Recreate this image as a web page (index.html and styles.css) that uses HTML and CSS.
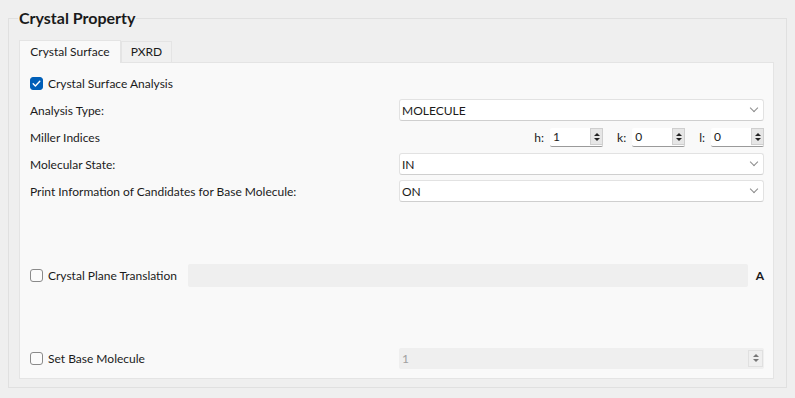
FILE: index.html
```html
<!DOCTYPE html>
<html lang="en">
<head>
    <meta charset="UTF-8">
    <title>Crystal Property</title>
    <link rel="stylesheet" href="styles.css">
</head>
<body>

    <div class="group">
        <div class="group-title">Crystal Property</div>

        <div class="tabs">
            <div class="tab active">Crystal Surface</div>
            <div class="tab">PXRD</div>
        </div>

        <div class="panel">
            <label class="row check-row">
                <span class="check checked">
                    <svg viewBox="0 0 13 13" width="13" height="13"><path d="M3.2 6.8 L5.4 9 L9.8 4.2" fill="none" stroke="#fff" stroke-width="1.4" stroke-linecap="round" stroke-linejoin="round"/></svg>
                </span>
                Crystal Surface Analysis
            </label>

            <div class="row field-row">
                <span class="label">Analysis Type:</span>
                <div class="combo">MOLECULE<span class="chevron"></span></div>
            </div>

            <div class="row field-row">
                <span class="label">Miller Indices</span>
                <div class="miller">
                    <span class="idx">h:</span>
                    <div class="spin"><span class="spin-value">1</span><span class="spin-btn"><i class="up"></i><i class="down"></i></span></div>
                    <span class="idx">k:</span>
                    <div class="spin"><span class="spin-value">0</span><span class="spin-btn"><i class="up"></i><i class="down"></i></span></div>
                    <span class="idx">l:</span>
                    <div class="spin"><span class="spin-value">0</span><span class="spin-btn"><i class="up"></i><i class="down"></i></span></div>
                </div>
            </div>

            <div class="row field-row">
                <span class="label">Molecular State:</span>
                <div class="combo">IN<span class="chevron"></span></div>
            </div>

            <div class="row field-row">
                <span class="label">Print Information of Candidates for Base Molecule:</span>
                <div class="combo">ON<span class="chevron"></span></div>
            </div>

            <div class="row plane-row">
                <label class="check-label">
                    <span class="check"></span>
                    Crystal Plane Translation
                </label>
                <div class="text-input disabled"></div>
                <span class="unit">A</span>
            </div>

            <div class="row field-row base-row">
                <label class="check-label">
                    <span class="check"></span>
                    Set Base Molecule
                </label>
                <div class="spin wide disabled"><span class="spin-value">1</span><span class="spin-btn"><i class="up"></i><i class="down"></i></span></div>
            </div>
        </div>
    </div>

</body>
</html>
```

FILE: styles.css
```css
body {
    margin: 0;
    background-color: #efefef;
    font-family: 'Lato', 'Noto Sans', sans-serif;
    font-size: 12px;
    color: #1b1b1b;
    width: 795px;
    height: 398px;
    overflow: hidden;
}

.group {
    margin: 18px 0 0 8px;
    width: 779px;
    height: 370px;
    box-sizing: border-box;
    border: 1px solid #e0e0e0;
    padding: 21px 12px 8px 10px;
    position: relative;
}

/* title sits over the top border, like a Qt group box */
.group-title {
    position: absolute;
    top: -11px;
    left: 9px;
    padding: 0 1px;
    background-color: #efefef;
    font-size: 16px;
    line-height: 20px;
    font-weight: 700;
    color: #1a1a1a;
}

.tabs {
    display: flex;
    align-items: flex-end;
    height: 22px;
}

.tab {
    height: 21px;
    line-height: 20px;
    width: 51px;
    text-align: center;
    box-sizing: border-box;
    border: 1px solid #e4e4e4;
    border-bottom: none;
    background-color: #f0f0f0;
}

.tab.active {
    width: 102px;
    height: 23px;
    line-height: 22px;
    background-color: #f9f9f9;
    margin-bottom: -1px;
    position: relative;
    z-index: 1;
}

.panel {
    height: 317px;
    box-sizing: border-box;
    background-color: #f9f9f9;
    border: 1px solid #e4e4e4;
    padding: 9px 9px 0 10px;
    display: flex;
    flex-direction: column;
    gap: 5px;
}

.row {
    display: flex;
    align-items: center;
    height: 22px;
}

.check-row {
    gap: 5px;
}

.check {
    width: 13px;
    height: 13px;
    box-sizing: border-box;
    border: 1px solid #8a8a8a;
    border-radius: 3px;
    background-color: #fbfbfb;
    display: inline-flex;
    flex-shrink: 0;
}

.check.checked {
    background-color: #005fb8;
    border-color: #005fb8;
}

.check svg {
    margin: -1px;
}

.label,
.check-label {
    width: 369px;
    flex-shrink: 0;
    display: flex;
    align-items: center;
    gap: 5px;
}

.combo {
    flex: 1;
    height: 22px;
    box-sizing: border-box;
    border: 1px solid #e2e2e2;
    border-bottom-color: #cfcfcf;
    border-radius: 3px;
    background-color: #fff;
    padding-left: 2px;
    display: flex;
    align-items: center;
    position: relative;
}

.chevron {
    position: absolute;
    right: 6px;
    top: 5px;
    width: 5px;
    height: 5px;
    border-right: 1px solid #8c8c8c;
    border-bottom: 1px solid #8c8c8c;
    transform: rotate(45deg);
}

.miller {
    flex: 1;
    display: flex;
    justify-content: flex-end;
    align-items: center;
}

.idx {
    margin: 0 6px 0 14px;
}

.spin {
    width: 53px;
    height: 19px;
    box-sizing: border-box;
    background-color: #fff;
    border-bottom: 1px solid #9a9a9a;
    border-radius: 2px;
    display: flex;
    align-items: center;
}

.spin-value {
    flex: 1;
    padding-left: 3px;
}

.spin-btn {
    width: 13px;
    height: 17px;
    box-sizing: border-box;
    border: 1px solid #cfcfcf;
    background-color: #e6e6e6;
    display: flex;
    flex-direction: column;
    align-items: center;
    justify-content: center;
    gap: 2px;
}

.spin-btn i {
    width: 0;
    height: 0;
    border-left: 3px solid transparent;
    border-right: 3px solid transparent;
}

.spin-btn .up {
    border-bottom: 3px solid #222;
}

.spin-btn .down {
    border-top: 3px solid #222;
}

.plane-row {
    height: 23px;
    margin-top: 57px;
}

.plane-row .check-label {
    width: auto;
    margin-right: 11px;
}

.text-input {
    flex: 1;
    height: 23px;
    border-radius: 2px;
}

.disabled {
    background-color: #efefef;
}

.unit {
    margin-left: 8px;
    font-weight: 700;
}

.base-row {
    margin-top: 55px;
}

.spin.wide {
    flex: 1;
    width: auto;
    height: 21px;
    border-bottom: none;
}

.spin.disabled .spin-value {
    color: #a0a0a0;
}

.spin.disabled .spin-btn {
    background-color: #efefef;
    border-color: #e0e0e0;
    width: 15px;
    margin-right: 1px;
}

.spin.disabled .spin-btn i {
    border-bottom-color: #777;
    border-top-color: #777;
}
```
